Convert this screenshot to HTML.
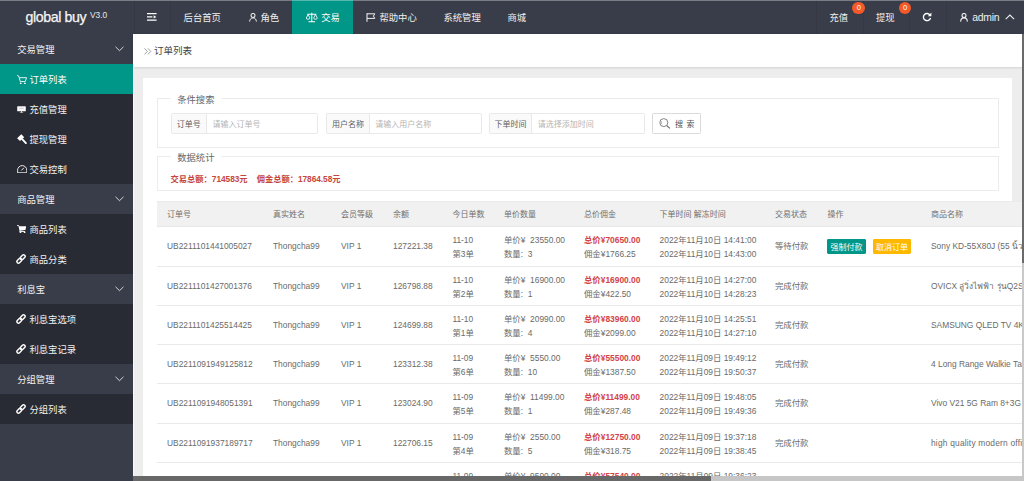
<!DOCTYPE html>
<html lang="zh-CN">
<head>
<meta charset="utf-8">
<title>global buy</title>
<style>
*{box-sizing:border-box;margin:0;padding:0}
html,body{width:1024px;height:481px;overflow:hidden;background:#ededed}
body{position:relative;font-family:"Liberation Sans","Noto Sans CJK SC",sans-serif;font-size:9.33px;color:#666;line-height:1}
.abs{position:absolute}
#topline{left:0;top:0;width:1024px;height:1px;background:rgba(255,255,255,.33);z-index:9}
#header{left:0;top:0;width:1024px;height:33.6px;background:#393d49}
#logo{left:0;top:1px;width:133.3px;height:32.6px;color:#f4f4f4;font-size:14.2px;line-height:32.6px;letter-spacing:-.38px;white-space:nowrap}
#logo span.t{position:absolute;left:25.4px;top:-.5px;-webkit-text-stroke:.25px #f4f4f4}
#logo sup{position:absolute;left:89.9px;top:-2.2px;font-size:8.4px;letter-spacing:0;color:#e8e8e8}
.hn{position:absolute;top:1px;height:32.6px;line-height:34px;color:#f0f0f0;font-size:9.33px;white-space:nowrap}
.hn.act{background:#009688;color:#fff;box-shadow:0 -1px 0 #009688}
.vd{position:absolute;top:1px;width:1px;height:32.6px;background:#343843}
.badge{position:absolute;z-index:3;top:1.7px;width:12.8px;height:12.8px;border-radius:50%;background:#f4592a;color:#fff;font-size:7.6px;line-height:12.8px;text-align:center}
#side{left:0;top:33.6px;width:133.3px;height:447.4px;background:#393d49}
.sp{position:absolute;left:0;width:133.3px;height:30px;line-height:32.2px;color:#f2f2f2;background:#393d49;padding-left:17.2px;font-size:9.33px}
.sc{position:absolute;left:0;width:133.3px;height:30px;line-height:32.2px;color:#f2f2f2;background:#282b33;padding-left:29.4px;font-size:9.33px}
.sc.act{background:#009688;color:#fff}
.sc svg{position:absolute;left:16.8px;top:11px}
.sp svg{position:absolute;left:115px;top:12.6px}
#crumb{left:133.3px;top:33.6px;width:890.7px;height:33.6px;background:#fff;box-shadow:0 1px 2px rgba(0,0,0,.11);color:#444;font-size:9.5px;line-height:34.6px;padding-left:11px}
#card{left:143.2px;top:77.7px;width:869.2px;height:420px;background:#fff}
.fs{position:absolute;border:1px solid #ececec}
.fs .lg{position:absolute;left:12.6px;top:-7.5px;height:14px;line-height:16px;padding:0 6.6px;background:#fff;font-size:9.33px;color:#666}
.ig{position:absolute;top:113px;height:21px;border:1px solid #e9e9e9;border-radius:1.3px;background:#fff}
.ig .lb{position:absolute;left:0;top:0;height:19px;line-height:22.4px;background:#fafafa;border-right:1px solid #e9e9e9;text-align:center;color:#606060;font-size:8px}
.ig .ph{position:absolute;top:0;height:19px;line-height:22.4px;color:#b5b5b5;font-size:8px}
#tbl{left:157px;top:201px;width:880px}
.th{position:absolute;left:0;top:0;width:880px;height:26px;background:#f1f1f1;border-top:1px solid #ebebeb;border-bottom:1px solid #e8e8e8}
.th span{position:absolute;top:0;line-height:26.8px;color:#707070;white-space:nowrap;font-size:8px}
.tr{position:absolute;left:0;width:880px;height:39px;border-bottom:1px solid #e9e9e9;background:#fff}
.tr span{position:absolute;white-space:nowrap;line-height:13.3px;color:#6a6a6a;font-size:8.4px}
.tr .one{top:13.4px}
.tr .l1{top:7.4px}
.tr .l2{top:20.7px}
.tr .red{color:#d2434a;font-weight:bold}
.tr span.btn{position:absolute;top:12.2px;height:14.7px;line-height:17px;border-radius:1.4px;color:#fff;font-size:8px;text-align:center}
#hs{left:133.3px;top:476.2px;width:890.7px;height:4.8px;background:#c6c6c6}
#hs i{position:absolute;left:0;top:0;width:577.7px;height:4.8px;background:#686868}
#vs{left:1022.3px;top:33.6px;width:1.7px;height:442.6px;background:#c9c9c9}
#vs i{position:absolute;left:0;top:0;width:1.7px;height:229px;background:#6a6a6a}
</style>
</head>
<body>
<div id="topline" class="abs"></div>

<div id="header" class="abs">
  <div id="logo" class="abs"><span class="t">global buy</span><sup>V3.0</sup></div>
  <div class="vd" style="left:133.6px"></div>
  <div class="hn" style="left:134px;width:36px">
    <svg class="abs" style="left:13.4px;top:12.2px" width="10" height="8" viewBox="0 0 10 8"><path d="M0 .6h9.6M0 3.9h5.4M0 7.2h9.6" stroke="#fff" stroke-width="1.25" fill="none"/><path d="M6.6 2.2L9.4 3.9 6.6 5.6z" fill="#fff"/></svg>
  </div>
  <div class="vd" style="left:170px"></div>
  <div class="hn" style="left:183.6px">后台首页</div>
  <div class="hn" style="left:260.4px">角色
    <svg class="abs" style="left:-11.6px;top:12.2px" width="8" height="9" viewBox="0 0 8 9"><circle cx="4" cy="2.5" r="2" stroke="#f0f0f0" stroke-width="1.05" fill="none"/><path d="M.6 8.6C.8 6 2.2 4.9 4 4.9S7.2 6 7.4 8.6" stroke="#f0f0f0" stroke-width=".95" fill="none"/></svg>
  </div>
  <div class="hn act" style="left:291.8px;width:61px">
    <svg class="abs" style="left:14.3px;top:11.4px" width="11.6" height="10.6" viewBox="0 0 11 10"><path d="M5.5 .6v8.2M2.4 9.2h6.2M1.2 2.2h8.6" stroke="#fff" stroke-width=".95" fill="none"/><path d="M.3 5.6L2 2.4l1.7 3.2a1.7 1.3 0 0 1-3.4 0zM7.3 5.6L9 2.4l1.7 3.2a1.7 1.3 0 0 1-3.4 0z" stroke="#fff" stroke-width=".8" fill="none"/></svg>
    <span class="abs" style="left:29.4px;top:0">交易</span>
  </div>
  <div class="hn" style="left:379.4px">帮助中心
    <svg class="abs" style="left:-13.2px;top:12.4px" width="10" height="10" viewBox="0 0 10 10"><path d="M1 .2v8.6" stroke="#f0f0f0" stroke-width="1.05" fill="none"/><path d="M1 .8h7.8L7.4 3.1l1.4 2.3H1" stroke="#f0f0f0" stroke-width="1" fill="none"/></svg>
  </div>
  <div class="hn" style="left:443.4px">系统管理</div>
  <div class="hn" style="left:507.4px">商城</div>

  <div class="vd" style="left:815.6px"></div>
  <div class="hn" style="left:829.4px">充值</div>
  <div class="badge" style="left:852.4px">0</div>
  <div class="vd" style="left:862.8px"></div>
  <div class="hn" style="left:876px">提现</div>
  <div class="badge" style="left:898.6px">0</div>
  <div class="vd" style="left:908.6px"></div>
  <div class="hn" style="left:921px;width:12px">
    <svg class="abs" style="left:1px;top:11.2px" width="10" height="10" viewBox="0 0 10 10"><path d="M8.1 3.2A3.6 3.6 0 1 0 8.5 6" stroke="#fff" stroke-width="1.35" fill="none"/><path d="M9.4 .6v3.6H5.8z" fill="#fff"/></svg>
  </div>
  <div class="vd" style="left:945.6px"></div>
  <div class="hn" style="left:972.2px;font-size:10.4px;letter-spacing:-.22px">admin
    <svg class="abs" style="left:-12.2px;top:12.3px" width="8" height="9" viewBox="0 0 8 9"><circle cx="4" cy="2.5" r="2" stroke="#f0f0f0" stroke-width="1.1" fill="none"/><path d="M.6 8.6C.8 6 2.2 4.9 4 4.9S7.2 6 7.4 8.6" stroke="#f0f0f0" stroke-width="1.1" fill="none"/></svg>
    <svg class="abs" style="left:32.4px;top:12.6px" width="10" height="6" viewBox="0 0 10 6"><path d="M.7 5.2L4.9 1.1l4.2 4.1" stroke="#f0f0f0" stroke-width="1.1" fill="none"/></svg>
  </div>
</div>

<div id="side" class="abs">
  <div class="sp" style="top:0">交易管理<svg width="9" height="6" viewBox="0 0 9 6"><path d="M.5 .8l4 3.9 4-3.9" stroke="#e8e8e8" stroke-width=".9" fill="none"/></svg></div>
  <div class="sc act" style="top:30px">订单列表
    <svg style="top:11px" width="10" height="9.4" viewBox="0 0 10 9.4"><path d="M.2 .5l1.5 .5 1.6 5.6h4.9l1.4-3.9H2.9" stroke="#fff" stroke-width=".9" fill="none" stroke-linejoin="round"/><circle cx="3.7" cy="8.3" r=".85" fill="#fff"/><circle cx="7.9" cy="8.3" r=".85" fill="#fff"/></svg></div>
  <div class="sc" style="top:60px">充值管理
    <svg style="top:12.2px" width="9" height="7.4" viewBox="0 0 9 7.4"><rect x=".2" y=".2" width="8.6" height="5" rx=".5" fill="#fafafa"/><rect x="2.2" y="1.6" width="4.6" height="1.6" fill="#d8d8dc"/><path d="M4.5 5v1.6M2.8 6.9h3.4" stroke="#f0f0f0" stroke-width=".8"/></svg></div>
  <div class="sc" style="top:90px">提现管理
    <svg style="top:10.4px" width="10" height="10.2" viewBox="0 0 10 10.2"><path d="M4.3 .3L7.2 3.2 3 7.1 .1 4.2z" fill="#fff"/><path d="M5.2 5.2l3.7 3.9" stroke="#fff" stroke-width="1.9" stroke-linecap="round"/></svg></div>
  <div class="sc" style="top:120px">交易控制
    <svg style="top:11.3px" width="10.4" height="8.4" viewBox="0 0 10.4 8.4"><path d="M.6 7.8V5.2a4.6 4.6 0 0 1 9.2 0v2.6z" stroke="#f2f2f2" stroke-width=".95" fill="none" stroke-linejoin="round"/><path d="M4.4 5.4L6.9 2.8" stroke="#f2f2f2" stroke-width="1"/></svg></div>
  <div class="sp" style="top:150px">商品管理<svg width="9" height="6" viewBox="0 0 9 6"><path d="M.5 .8l4 3.9 4-3.9" stroke="#e8e8e8" stroke-width=".9" fill="none"/></svg></div>
  <div class="sc" style="top:180px">商品列表
    <svg style="top:11.4px" width="9.4" height="8.4" viewBox="0 0 9.4 8.4"><path d="M.1 .5h1.5l.5 1.2 .9 3.9-.4 .9h5.6" stroke="#fff" stroke-width=".9" fill="none"/><path d="M1.9 1.3h7.4L8.4 5 2.9 5.7z" fill="#fff"/><circle cx="3.5" cy="7.5" r=".85" fill="#fff"/><circle cx="7.6" cy="7.5" r=".85" fill="#fff"/></svg></div>
  <div class="sc" style="top:210px">商品分类
    <svg style="top:10.9px;left:16.4px" width="10" height="10" viewBox="0 0 10 10"><g stroke="#fff" stroke-width="1.45" fill="none"><rect x="-2.75" y="-1.55" width="5.5" height="3.1" rx="1.55" transform="translate(3.3 6.7) rotate(-45)"/><rect x="-2.75" y="-1.55" width="5.5" height="3.1" rx="1.55" transform="translate(6.7 3.3) rotate(-45)"/></g></svg></div>
  <div class="sp" style="top:240px">利息宝<svg width="9" height="6" viewBox="0 0 9 6"><path d="M.5 .8l4 3.9 4-3.9" stroke="#e8e8e8" stroke-width=".9" fill="none"/></svg></div>
  <div class="sc" style="top:270px">利息宝选项
    <svg style="top:10.9px;left:16.4px" width="10" height="10" viewBox="0 0 10 10"><g stroke="#fff" stroke-width="1.45" fill="none"><rect x="-2.75" y="-1.55" width="5.5" height="3.1" rx="1.55" transform="translate(3.3 6.7) rotate(-45)"/><rect x="-2.75" y="-1.55" width="5.5" height="3.1" rx="1.55" transform="translate(6.7 3.3) rotate(-45)"/></g></svg></div>
  <div class="sc" style="top:300px">利息宝记录
    <svg style="top:10.9px;left:16.4px" width="10" height="10" viewBox="0 0 10 10"><g stroke="#fff" stroke-width="1.45" fill="none"><rect x="-2.75" y="-1.55" width="5.5" height="3.1" rx="1.55" transform="translate(3.3 6.7) rotate(-45)"/><rect x="-2.75" y="-1.55" width="5.5" height="3.1" rx="1.55" transform="translate(6.7 3.3) rotate(-45)"/></g></svg></div>
  <div class="sp" style="top:330px">分组管理<svg width="9" height="6" viewBox="0 0 9 6"><path d="M.5 .8l4 3.9 4-3.9" stroke="#e8e8e8" stroke-width=".9" fill="none"/></svg></div>
  <div class="sc" style="top:360px">分组列表
    <svg style="top:10.9px;left:16.4px" width="10" height="10" viewBox="0 0 10 10"><g stroke="#fff" stroke-width="1.45" fill="none"><rect x="-2.75" y="-1.55" width="5.5" height="3.1" rx="1.55" transform="translate(3.3 6.7) rotate(-45)"/><rect x="-2.75" y="-1.55" width="5.5" height="3.1" rx="1.55" transform="translate(6.7 3.3) rotate(-45)"/></g></svg></div>
</div>

<div id="crumb" class="abs"><svg class="abs" style="left:10.4px;top:14.4px" width="8" height="7" viewBox="0 0 8 7"><path d="M.5 .4l2.9 3-2.9 3M3.9 .4l2.9 3-2.9 3" stroke="#808080" stroke-width=".75" fill="none"/></svg><span class="abs" style="left:20.6px;top:0">订单列表</span></div>

<div class="abs" style="left:133.3px;top:67px;width:1.2px;height:414px;background:#f8f8f8"></div>
<div id="card" class="abs"></div>

<div class="fs" style="left:157px;top:98px;width:842px;height:50px"><span class="lg">条件搜索</span></div>
<div class="ig" style="left:170.6px;width:147.6px"><span class="lb" style="width:35.4px">订单号</span><span class="ph" style="left:41px">请输入订单号</span></div>
<div class="ig" style="left:326.2px;width:155.6px"><span class="lb" style="width:42.6px">用户名称</span><span class="ph" style="left:48px">请输入用户名称</span></div>
<div class="ig" style="left:488.8px;width:156.4px"><span class="lb" style="width:42.6px">下单时间</span><span class="ph" style="left:48px">请选择添加时间</span></div>
<div class="ig" style="left:652px;width:49px;border-color:#dadada">
  <svg class="abs" style="left:6px;top:3.6px" width="12" height="11" viewBox="0 0 12 11"><circle cx="4.8" cy="4.6" r="4" stroke="#666" stroke-width=".8" fill="none"/><path d="M7.8 7.6l3 2.8" stroke="#666" stroke-width="1.1"/><path d="M2.6 3.4a2.6 2.6 0 0 0 0 2.4" stroke="#666" stroke-width=".6" fill="none"/></svg>
  <span class="abs" style="left:22px;top:0;line-height:22.4px;font-size:8px;color:#555;white-space:nowrap;letter-spacing:.7px">搜 索</span>
</div>

<div class="fs" style="left:157px;top:156px;width:842px;height:35px"><span class="lg">数据统计</span></div>
<div class="abs" style="left:170.6px;top:173.6px;line-height:11px;font-size:8.25px;color:#c6463d;font-weight:bold;white-space:nowrap"><span>交易总额：714583元</span><span style="margin-left:9px">佣金总额：17864.58元</span></div>

<div id="tbl" class="abs">
  <div class="th">
    <span style="left:10px">订单号</span><span style="left:116px">真实姓名</span><span style="left:184px">会员等级</span><span style="left:236px">余额</span><span style="left:295.4px">今日单数</span><span style="left:347px">单价数量</span><span style="left:427px">总价佣金</span><span style="left:502.6px">下单时间 解冻时间</span><span style="left:618px">交易状态</span><span style="left:670.4px">操作</span><span style="left:774px">商品名称</span>
  </div>

  <div class="tr" style="top:26px;height:40px">
    <span class="one" style="left:10px">UB2211101441005027</span><span class="one" style="left:116px">Thongcha99</span><span class="one" style="left:184px">VIP 1</span><span class="one" style="left:236px">127221.38</span>
    <span class="l1" style="left:295.4px">11-10</span><span class="l2" style="left:295.4px">第3单</span>
    <span class="l1" style="left:347px">单价¥&nbsp; 23550.00</span><span class="l2" style="left:347px">数量:&nbsp; 3</span>
    <span class="l1 red" style="left:427px">总价¥70650.00</span><span class="l2" style="left:427px">佣金¥1766.25</span>
    <span class="l1" style="left:502.6px">2022年11月10日 14:41:00</span><span class="l2" style="left:502.6px">2022年11月10日 14:43:00</span>
    <span class="one" style="left:618px">等待付款</span>
    <span class="btn" style="left:670.4px;width:38.4px;background:#009688">强制付款</span><span class="btn" style="left:715.8px;width:38.6px;background:#ffb800">取消订单</span>
    <span class="one" style="left:774px">Sony KD-55X80J (55 นิ้ว) 4K Ultra HD</span>
  </div>

  <div class="tr" style="top:66px;height:39px">
    <span class="one" style="left:10px">UB2211101427001376</span><span class="one" style="left:116px">Thongcha99</span><span class="one" style="left:184px">VIP 1</span><span class="one" style="left:236px">126798.88</span>
    <span class="l1" style="left:295.4px">11-10</span><span class="l2" style="left:295.4px">第2单</span>
    <span class="l1" style="left:347px">单价¥&nbsp; 16900.00</span><span class="l2" style="left:347px">数量:&nbsp; 1</span>
    <span class="l1 red" style="left:427px">总价¥16900.00</span><span class="l2" style="left:427px">佣金¥422.50</span>
    <span class="l1" style="left:502.6px">2022年11月10日 14:27:00</span><span class="l2" style="left:502.6px">2022年11月10日 14:28:23</span>
    <span class="one" style="left:618px">完成付款</span>
    <span class="one" style="left:774px">OVICX ลู่วิ่งไฟฟ้า รุ่นQ2S Treadmill</span>
  </div>

  <div class="tr" style="top:105px;height:39px">
    <span class="one" style="left:10px">UB2211101425514425</span><span class="one" style="left:116px">Thongcha99</span><span class="one" style="left:184px">VIP 1</span><span class="one" style="left:236px">124699.88</span>
    <span class="l1" style="left:295.4px">11-10</span><span class="l2" style="left:295.4px">第1单</span>
    <span class="l1" style="left:347px">单价¥&nbsp; 20990.00</span><span class="l2" style="left:347px">数量:&nbsp; 4</span>
    <span class="l1 red" style="left:427px">总价¥83960.00</span><span class="l2" style="left:427px">佣金¥2099.00</span>
    <span class="l1" style="left:502.6px">2022年11月10日 14:25:51</span><span class="l2" style="left:502.6px">2022年11月10日 14:27:10</span>
    <span class="one" style="left:618px">完成付款</span>
    <span class="one" style="left:774px">SAMSUNG QLED TV 4K Smart</span>
  </div>

  <div class="tr" style="top:144px;height:39px">
    <span class="one" style="left:10px">UB2211091949125812</span><span class="one" style="left:116px">Thongcha99</span><span class="one" style="left:184px">VIP 1</span><span class="one" style="left:236px">123312.38</span>
    <span class="l1" style="left:295.4px">11-09</span><span class="l2" style="left:295.4px">第6单</span>
    <span class="l1" style="left:347px">单价¥&nbsp; 5550.00</span><span class="l2" style="left:347px">数量:&nbsp; 10</span>
    <span class="l1 red" style="left:427px">总价¥55500.00</span><span class="l2" style="left:427px">佣金¥1387.50</span>
    <span class="l1" style="left:502.6px">2022年11月09日 19:49:12</span><span class="l2" style="left:502.6px">2022年11月09日 19:50:37</span>
    <span class="one" style="left:618px">完成付款</span>
    <span class="one" style="left:774px">4 Long Range Walkie Talkie</span>
  </div>

  <div class="tr" style="top:183px;height:40px">
    <span class="one" style="left:10px">UB2211091948051391</span><span class="one" style="left:116px">Thongcha99</span><span class="one" style="left:184px">VIP 1</span><span class="one" style="left:236px">123024.90</span>
    <span class="l1" style="left:295.4px">11-09</span><span class="l2" style="left:295.4px">第5单</span>
    <span class="l1" style="left:347px">单价¥&nbsp; 11499.00</span><span class="l2" style="left:347px">数量:&nbsp; 1</span>
    <span class="l1 red" style="left:427px">总价¥11499.00</span><span class="l2" style="left:427px">佣金¥287.48</span>
    <span class="l1" style="left:502.6px">2022年11月09日 19:48:05</span><span class="l2" style="left:502.6px">2022年11月09日 19:49:36</span>
    <span class="one" style="left:618px">完成付款</span>
    <span class="one" style="left:774px">Vivo V21 5G Ram 8+3G Rom 128GB</span>
  </div>

  <div class="tr" style="top:223px;height:39px">
    <span class="one" style="left:10px">UB2211091937189717</span><span class="one" style="left:116px">Thongcha99</span><span class="one" style="left:184px">VIP 1</span><span class="one" style="left:236px">122706.15</span>
    <span class="l1" style="left:295.4px">11-09</span><span class="l2" style="left:295.4px">第4单</span>
    <span class="l1" style="left:347px">单价¥&nbsp; 2550.00</span><span class="l2" style="left:347px">数量:&nbsp; 5</span>
    <span class="l1 red" style="left:427px">总价¥12750.00</span><span class="l2" style="left:427px">佣金¥318.75</span>
    <span class="l1" style="left:502.6px">2022年11月09日 19:37:18</span><span class="l2" style="left:502.6px">2022年11月09日 19:38:45</span>
    <span class="one" style="left:618px">完成付款</span>
    <span class="one" style="left:774px;letter-spacing:.2px">high quality modern office chair</span>
  </div>

  <div class="tr" style="top:262px;height:39px">
    <span class="l1" style="left:295.4px">11-09</span><span class="l2" style="left:295.4px">第3单</span>
    <span class="l1" style="left:347px">单价¥&nbsp; 9590.00</span><span class="l2" style="left:347px">数量:&nbsp; 6</span>
    <span class="l1 red" style="left:427px">总价¥57540.00</span><span class="l2" style="left:427px">佣金¥1438.50</span>
    <span class="l1" style="left:502.6px">2022年11月09日 19:36:23</span><span class="l2" style="left:502.6px">2022年11月09日 19:37:12</span>
  </div>
</div>

<div id="hs" class="abs"><i></i></div>
<div id="vs" class="abs"><i></i></div>
</body>
</html>
